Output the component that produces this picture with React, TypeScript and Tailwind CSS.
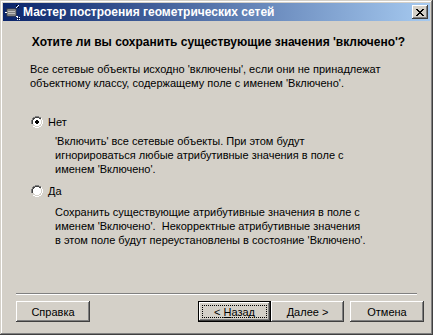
import React from "react";

const bevelOut =
  "shadow-[inset_-1px_-1px_#404040,inset_1px_1px_#ffffff,inset_-2px_-2px_#808080,inset_2px_2px_#d4d0c8]";

function Radio({ checked }: { checked: boolean }) {
  return (
    <svg width="12" height="12" viewBox="0 0 12 12" className="shrink-0">
      <path d="M4 0h4v1H4zM2 1h2v1H2zM8 1h2v1H8zM1 2h1v2H1zM0 4h1v4H0zM1 8h1v0z" fill="#808080" />
      <path d="M10 2h1v2h-1zM11 4h1v4h-1zM10 8h1v2h-1zM8 10h2v1H8zM2 10h2v1H2zM4 11h4v1H4z" fill="#ffffff" />
      <path d="M4 1h4v1H4zM2 2h2v1H2zM8 2h2v1H8zM1 4h1v4H1zM2 3h1v1H2zM1 8h1v0z" fill="#404040" />
      <path d="M9 3h1v1H9zM10 4h1v4h-1zM9 8h1v1H9zM8 9h1v1H8zM4 10h4v1H4zM3 9h1v1H3zM2 8h1v1H2zM1 8h1v1H1z" fill="#d4d0c8" />
      <path d="M4 2h4v1H4zM3 3h6v1H3zM2 4h8v4H2zM3 8h6v1H3zM4 9h4v1H4z" fill="#ffffff" />
      {checked && <path d="M5 4h2v1H5zM4 5h4v2H4zM5 7h2v1H5z" fill="#000000" />}
    </svg>
  );
}

function Button({
  label,
  u,
  rest,
  isDefault,
  className,
}: {
  label?: string;
  u?: string;
  rest?: string;
  isDefault?: boolean;
  className?: string;
}) {
  if (isDefault) {
    return (
      <div className={`h-[21px] border border-black bg-[#d4d0c8] ${className ?? ""}`}>
        <div className={`h-full ${bevelOut} p-[3px]`}>
          <div className="h-full border border-dotted border-black flex items-center justify-center">
            <span>
              {label}
              <span className="underline">{u}</span>
              {rest}
            </span>
          </div>
        </div>
      </div>
    );
  }
  return (
    <div className={`h-[21px] bg-[#d4d0c8] ${bevelOut} flex items-center justify-center ${className ?? ""}`}>
      <span>
        {label}
        <span className="underline">{u}</span>
        {rest}
      </span>
    </div>
  );
}

function WizardIcon() {
  return (
    <svg width="16" height="16" viewBox="0 0 16 16" className="shrink-0">
      <rect x="3" y="5" width="9" height="7" fill="#c0c0c0" stroke="#404040" strokeWidth="1" />
      <rect x="4" y="6" width="7" height="1" fill="#808080" />
      <rect x="4" y="8" width="7" height="1" fill="#808080" />
      <rect x="4" y="10" width="7" height="1" fill="#808080" />
      <path d="M1 8h2v1H1zM12 12h2v1h-2z" fill="#ffffff" />
      <path d="M12 1h1v1h-1zM14 1h1v1h-1zM13 2h1v1h-1zM12 3h1v1h-1zM14 3h1v1h-1z" fill="#ffffff" />
      <path d="M12 1h1v1h-1zM14 3h1v1h-1z" fill="#000000" />
      <path d="M13 13h1v1h-1zM15 13h1v1h-1zM14 14h1v1h-1zM13 15h1v1h-1zM15 15h1v1h-1z" fill="#ffffff" />
      <path d="M14 14h1v1h-1z" fill="#000000" />
    </svg>
  );
}

export default function App() {
  return (
    <div
      className="w-[433px] h-[335px] bg-[#d4d0c8] p-[3px] flex flex-col text-[11px] leading-[14px] text-black shadow-[inset_-1px_-1px_#404040,inset_1px_1px_#d4d0c8,inset_-2px_-2px_#808080,inset_2px_2px_#ffffff]"
      style={{ fontFamily: '"Liberation Sans", Arial, sans-serif' }}
    >
      <div className="h-[18px] flex items-center pl-[1px] pr-[2px] bg-[linear-gradient(to_right,#0a246a,#a6caf0)]">
        <WizardIcon />
        <span className="ml-[3px] text-white font-bold text-[12px] whitespace-nowrap">
          Мастер построения геометрических сетей
        </span>
        <div className={`ml-auto w-[16px] h-[14px] bg-[#d4d0c8] ${bevelOut} flex items-center justify-center`}>
          <svg width="8" height="7" viewBox="0 0 8 7">
            <path d="M0 0h2v1H0zM6 0h2v1H6zM1 1h2v1H1zM5 1h2v1H5zM2 2h4v1H2zM3 3h2v1H3zM2 4h4v1H2zM1 5h2v1H1zM5 5h2v1H5zM0 6h2v1H0zM6 6h2v1H6z" fill="#000" />
          </svg>
        </div>
      </div>

      <div className="flex-1 flex flex-col">
        <div className="mt-[14px] text-center font-bold text-[12px] whitespace-nowrap pl-[4px]">
          Хотите ли вы сохранить существующие значения 'включено'?
        </div>

        <div className="mt-[13px] pl-[27px] whitespace-nowrap">
          Все сетевые объекты исходно 'включены', если они не принадлежат
          <br />
          объектному классу, содержащему поле с именем 'Включено'.
        </div>

        <div className="mt-[25px] pl-[28px] flex items-center gap-[5px] h-[14px]">
          <Radio checked />
          <span>Нет</span>
        </div>

        <div className="mt-[5px] pl-[52px] whitespace-nowrap">
          'Включить' все сетевые объекты. При этом будут
          <br />
          игнорироваться любые атрибутивные значения в поле с
          <br />
          именем 'Включено'.
        </div>

        <div className="mt-[8px] pl-[28px] flex items-center gap-[5px] h-[14px]">
          <Radio checked={false} />
          <span>Да</span>
        </div>

        <div className="mt-[7px] pl-[52px] whitespace-nowrap">
          Сохранить существующие атрибутивные значения в поле с
          <br />
          именем 'Включено'.&nbsp; Некорректные атрибутивные значения
          <br />
          в этом поле будут переустановлены в состояние 'Включено'.
        </div>

        <div className="mt-auto mx-[13px] h-[2px] border-t border-[#808080] border-b border-b-white" />

        <div className="mt-[6px] mb-[10px] flex pl-[13px] pr-[6px]">
          <Button label="Справка" className="w-[74px]" />
          <Button label="< " u="Н" rest="азад" isDefault className="ml-[108px] w-[73px]" />
          <Button u="Д" rest="алее >" className="w-[73px]" />
          <Button label="Отмена" className="ml-[6px] w-[74px]" />
        </div>
      </div>
    </div>
  );
}
